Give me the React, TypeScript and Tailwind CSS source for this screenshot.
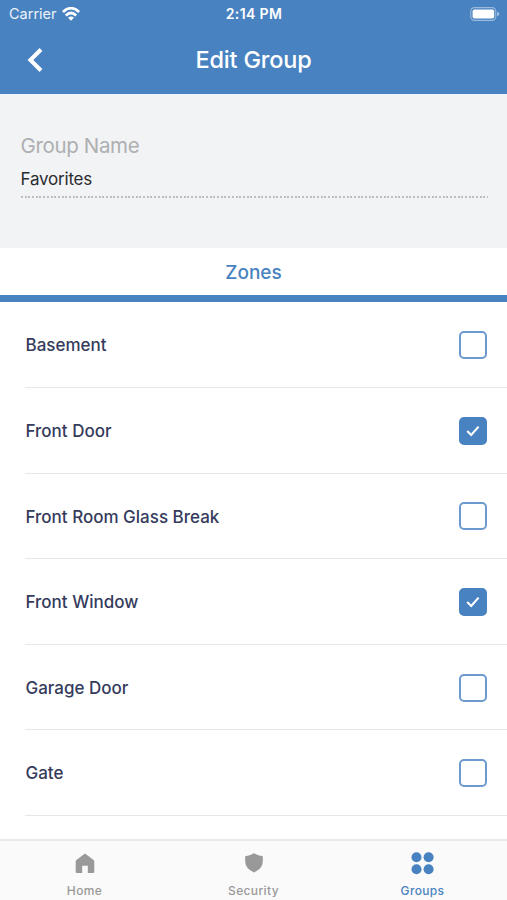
import React, { useState } from 'react';

interface Zone {
  id: number;
  name: string;
  selected: boolean;
}

const initialZones: Zone[] = [
  { id: 1, name: 'Basement', selected: false },
  { id: 2, name: 'Front Door', selected: true },
  { id: 3, name: 'Front Room Glass Break', selected: false },
  { id: 4, name: 'Front Window', selected: true },
  { id: 5, name: 'Garage Door', selected: false },
  { id: 6, name: 'Gate', selected: false },
];

const HomeIcon = () => (
  <svg className="w-5 h-5" viewBox="0 0 20 20" fill="currentColor">
    <path d="M10 0.4 L18.6 7 Q19.3 7.6 19.3 8.6 V19 Q19.3 19.9 18.4 19.9 H12.8 V12.8 H7.2 V19.9 H1.6 Q0.7 19.9 0.7 19 V8.6 Q0.7 7.6 1.4 7 Z" />
  </svg>
);

const ShieldIcon = () => (
  <svg className="w-5 h-5" viewBox="0 0 20 20" fill="currentColor">
    <path d="M10 0.3 Q14.2 2.6 18.8 3.2 V8.6 Q18.6 15.9 10 19.5 Q1.4 15.9 1.2 8.6 V3.2 Q5.8 2.6 10 0.3 Z" />
  </svg>
);

const GroupsIcon = () => (
  <svg className="w-6 h-6" viewBox="0 0 24 24" fill="currentColor">
    <circle cx="5.5" cy="6.2" r="5" />
    <circle cx="17.6" cy="6.2" r="5" />
    <circle cx="5.5" cy="18.2" r="5" />
    <circle cx="17.6" cy="18.2" r="5" />
  </svg>
);

const WifiIcon = () => (
  <svg className="w-[18px] h-[14px]" viewBox="0 0 18 14" fill="none" stroke="white" strokeWidth="2.7">
    <path d="M0.9 5 Q9 -2.6 17.1 5" />
    <path d="M3.8 8.4 Q9 3.6 14.2 8.4" />
    <path d="M9 13.8 L6 10.8 Q9 8.4 12 10.8 Z" fill="white" stroke="none" />
  </svg>
);

const BatteryIcon = () => (
  <svg className="w-[30px] h-[14px]" viewBox="0 0 30 14">
    <rect x="0.8" y="0.6" width="25" height="12.8" rx="3.6" fill="none" stroke="white" strokeOpacity="0.45" strokeWidth="1.1" />
    <rect x="2.6" y="2.4" width="21.6" height="9.2" rx="1.8" fill="white" />
    <path d="M27.2 4.8 Q29.4 5.4 29.4 7 Q29.4 8.6 27.2 9.2 Z" fill="white" fillOpacity="0.5" />
  </svg>
);

const tabs = [
  { id: 'home', label: 'Home', icon: HomeIcon },
  { id: 'security', label: 'Security', icon: ShieldIcon },
  { id: 'groups', label: 'Groups', icon: GroupsIcon },
];

interface ZoneRowProps {
  zone: Zone;
  onToggle: (id: number) => void;
}

const ZoneRow: React.FC<ZoneRowProps> = ({ zone, onToggle }) => (
  <li className="h-[85.6px] shrink-0 ml-[25px] pt-px pr-[20.5px] flex items-center justify-between border-b border-[#e6e7e9]">
    <span className="pl-[0.5px] pt-[2px] text-[17px] font-medium text-[#353b5c]">{zone.name}</span>
    <button
      role="checkbox"
      aria-checked={zone.selected}
      aria-label={zone.name}
      onClick={() => onToggle(zone.id)}
      className={`w-7 h-7 rounded-[5px] border-2 flex items-center justify-center ${zone.selected ? 'border-[#4982c1] bg-[#4982c1]' : 'border-[#6d9ace] bg-white'}`}
    >
      {zone.selected && (
        <svg className="w-3.5 h-3" viewBox="0 0 14 12" fill="none" stroke="white" strokeWidth="2.1">
          <path d="M1.2 6 L5.2 9.9 L12.6 1.6" />
        </svg>
      )}
    </button>
  </li>
);

export default function App() {
  const [zones, setZones] = useState(initialZones);
  const [groupName, setGroupName] = useState('Favorites');
  const [activeTab, setActiveTab] = useState('groups');

  const toggleZone = (id: number) => {
    setZones(zones.map((z) => (z.id === id ? { ...z, selected: !z.selected } : z)));
  };

  return (
    <div className="h-[900px] flex flex-col bg-white overflow-hidden font-['Inter','Liberation_Sans',sans-serif]">
      <header className="h-[94px] shrink-0 bg-[#4982c1] text-white">
        {/* Status bar */}
        <div className="h-[27px] grid grid-cols-3 items-center pl-[9px] pr-[7px]">
          <div className="flex items-center gap-[5px]">
            <span className="text-[14.5px] text-white/90">Carrier</span>
            <WifiIcon />
          </div>
          <span className="text-center text-[14px] font-semibold tracking-[0.4px] -ml-px">2:14 PM</span>
          <div className="flex justify-end">
            <BatteryIcon />
          </div>
        </div>

        {/* Title bar */}
        <div className="h-[66px] grid grid-cols-[80px_1fr_80px] items-center">
          <button aria-label="Back" className="pl-[27px]">
            <svg className="w-4 h-6" viewBox="0 0 16 24" fill="none" stroke="white" strokeWidth="4">
              <path d="M14 1.5 L3.4 12 L14 22.5" />
            </svg>
          </button>
          <h1 className="text-center text-[23.5px] font-medium tracking-[-0.2px]">Edit Group</h1>
        </div>
      </header>

      <section className="h-[154px] shrink-0 bg-[#f2f3f5] pl-[20.5px] pr-5 pt-9">
        <label htmlFor="group-name" className="block h-8 leading-8 text-[20.5px] tracking-[-0.35px] text-[#aeafb1]">
          Group Name
        </label>
        <input
          id="group-name"
          value={groupName}
          onChange={(e) => setGroupName(e.target.value)}
          className="block w-full h-[33px] text-[17px] tracking-[-0.2px] text-[#2b2c2f] outline-none"
        />
        <div className="h-[1.5px] mt-px -mr-px bg-[repeating-linear-gradient(90deg,#bcbdbf_0_2px,transparent_2px_3.7px)]" />
      </section>

      <h2 className="h-[54.4px] shrink-0 flex items-center justify-center pt-[3px] border-b-[7px] border-[#4982c1] text-[19px] font-medium text-[#4982c1]">
        Zones
      </h2>

      <ul className="flex-1 min-h-0 flex flex-col overflow-hidden">
        {zones.map((zone) => (
          <ZoneRow key={zone.id} zone={zone} onToggle={toggleZone} />
        ))}
      </ul>

      <nav className="h-[61px] shrink-0 grid grid-cols-3 bg-[#fafafa] border-t-2 border-[#e9e9e9]">
        {tabs.map((tab) => (
          <button
            key={tab.id}
            onClick={() => setActiveTab(tab.id)}
            className={`flex flex-col items-center pt-2.5 ${activeTab === tab.id ? 'text-[#4982c1]' : 'text-[#999999]'}`}
          >
            <span className="h-6 flex items-center">
              <tab.icon />
            </span>
            <span className="mt-2 text-[12px] leading-4 font-medium tracking-[0.35px]">{tab.label}</span>
          </button>
        ))}
      </nav>
    </div>
  );
}
